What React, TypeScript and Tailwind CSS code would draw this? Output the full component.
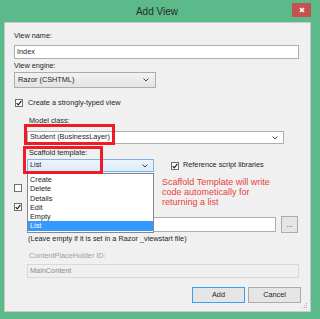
import React from "react";

const font = "font-['Liberation_Sans',sans-serif]";

function Check({ checked }: { checked?: boolean }) {
  return (
    <span className="flex h-[8px] w-[8px] shrink-0 items-center justify-center border border-[#707070] bg-white">
      {checked && (
        <svg width="6" height="6" viewBox="0 0 6 6">
          <path d="M0.6 3.2 L2.3 4.9 L5.4 0.8" fill="none" stroke="#222" strokeWidth="1.2" />
        </svg>
      )}
    </span>
  );
}

function Chevron() {
  return (
    <svg width="6" height="4" viewBox="0 0 6 4" className="shrink-0">
      <path d="M0.5 0.5 L3 3 L5.5 0.5" fill="none" stroke="#444" strokeWidth="1" />
    </svg>
  );
}

const items = ["Create", "Delete", "Details", "Edit", "Empty", "List"];

export default function App() {
  return (
    <div className={`relative h-[319px] w-[320px] overflow-hidden bg-[#5cba8a] ${font} text-[7.3px] text-[#1e1e1e]`}>
      {/* title bar */}
      <div className="relative flex h-[22px] items-center justify-center pr-[6px]">
        <span className="text-[10px] text-[#2b2b2b]">Add View</span>
        <div className="absolute left-[292px] top-[3px] flex h-[14px] w-[19px] items-center justify-center bg-[#c75050]">
          <svg width="6" height="6" viewBox="0 0 6 6">
            <path d="M1 1 L5 5 M5 1 L1 5" stroke="#fff" strokeWidth="1.6" />
          </svg>
        </div>
      </div>

      {/* content panel */}
      <div className="relative ml-[4px] h-[290px] w-[307px] border border-[#c9c9c9] bg-[#f0f0f0]">
        <div className="ml-[9px] mt-[8px] h-[10px] leading-[10px]">View name:</div>
        <div className="ml-[9px] mt-[4px] flex h-[14px] w-[285px] items-center border border-[#abadb3] bg-white px-[2px]">
          Index
        </div>
        <div className="ml-[9px] mt-[2px] h-[10px] leading-[10px]">View engine:</div>
        <div className="ml-[9px] mt-[1px] flex h-[16px] w-[142px] items-center justify-between border border-[#acacac] bg-gradient-to-b from-[#f2f2f2] to-[#e3e3e3] pl-[3px] pr-[6px]">
          <span>Razor (CSHTML)</span>
          <Chevron />
        </div>
        <div className="ml-[10px] mt-[10px] flex h-[10px] items-center gap-[5px]">
          <Check checked />
          <span>Create a strongly-typed view</span>
        </div>

        <div className="ml-[22px]">
          <div className="ml-[2px] mt-[8px] h-[10px] leading-[10px]">Model class:</div>
          <div className="mt-[5px] flex h-[13px] w-[257px] items-center justify-between border border-[#abadb3] bg-white pl-[2px] pr-[5px]">
            <span>Student (BusinessLayer)</span>
            <Chevron />
          </div>
          <div className="ml-[2px] mt-[4px] h-[10px] leading-[10px]">Scaffold template:</div>
          <div className="mt-[1px] flex h-[13px] items-center">
            <div className="flex h-[13px] w-[127px] items-center justify-between border border-[#7eb4ea] bg-gradient-to-b from-[#ecf4fc] to-[#dcecfc] pl-[2px] pr-[5px]">
              <span>List</span>
              <Chevron />
            </div>
            <div className="ml-[17px] flex items-center gap-[4px]">
              <Check checked />
              <span>Reference script libraries</span>
            </div>
          </div>
        </div>

        <div className="ml-[9px] mt-[11px] flex h-[10px] items-center gap-[5px]">
          <Check />
          <span>Create as a partial view</span>
        </div>
        <div className="ml-[9px] mt-[9px] flex h-[10px] items-center gap-[5px]">
          <Check checked />
          <span>Use a layout or master page:</span>
        </div>
        <div className="ml-[22px] mt-[4px] flex h-[17px] items-center">
          <div className="h-[15px] w-[249px] border border-[#abadb3] bg-white" />
          <div className="ml-[5px] flex h-[17px] w-[17px] items-center justify-center border border-[#acacac] bg-[#e5e5e5] text-[7px] leading-none">
            ...
          </div>
        </div>
        <div className="ml-[23px] mt-[1px] h-[10px] leading-[10px]">
          (Leave empty if it is set in a Razor _viewstart file)
        </div>
        <div className="ml-[24px] mt-[7px] h-[10px] leading-[10px] text-[#a0a0a0]">
          ContentPlaceHolder ID:
        </div>
        <div className="ml-[22px] mt-[3px] flex h-[14px] w-[272px] items-center border border-[#d9d9d9] bg-[#f0f0f0] px-[2px] text-[#8a8a8a]">
          MainContent
        </div>
        <div className="mt-[9px] flex h-[16px] justify-end gap-[3px] pr-[9px]">
          <div className="flex w-[53px] items-center justify-center border border-[#3c9ef0] bg-[#e5e5e5]">Add</div>
          <div className="flex w-[53px] items-center justify-center border border-[#acacac] bg-[#e5e5e5]">Cancel</div>
        </div>

        {/* dropdown list */}
        <div className="absolute left-[22px] top-[150px] w-[127px] border border-[#828790] bg-white py-[1px]">
          {items.map((it) => (
            <div
              key={it}
              className={`h-[9.3px] pl-[2px] leading-[9.3px] ${it === "List" ? "bg-[#3399ff] text-white" : ""}`}
            >
              {it}
            </div>
          ))}
        </div>

        {/* annotation */}
        <div className="absolute left-[19px] top-[101px] h-[21px] w-[91px] border-[3px] border-[#ee1c24]" />
        <div className="absolute left-[18px] top-[123px] h-[28px] w-[80px] border-[3px] border-[#ee1c24]" />
        <div className="absolute left-[157px] top-[154px] text-[9px] leading-[10px] text-[#e8413c]">
          <div>Scaffold Template will write</div>
          <div>code autometically for</div>
          <div>returning a list</div>
        </div>

        {/* resize grip */}
        <svg className="absolute bottom-[2px] right-[2px]" width="7" height="7" viewBox="0 0 7 7">
          <rect x="5" y="1" width="1" height="1" fill="#b0b0b0" />
          <rect x="3" y="3" width="1" height="1" fill="#b0b0b0" />
          <rect x="5" y="3" width="1" height="1" fill="#b0b0b0" />
          <rect x="1" y="5" width="1" height="1" fill="#b0b0b0" />
          <rect x="3" y="5" width="1" height="1" fill="#b0b0b0" />
          <rect x="5" y="5" width="1" height="1" fill="#b0b0b0" />
        </svg>
      </div>
    </div>
  );
}
